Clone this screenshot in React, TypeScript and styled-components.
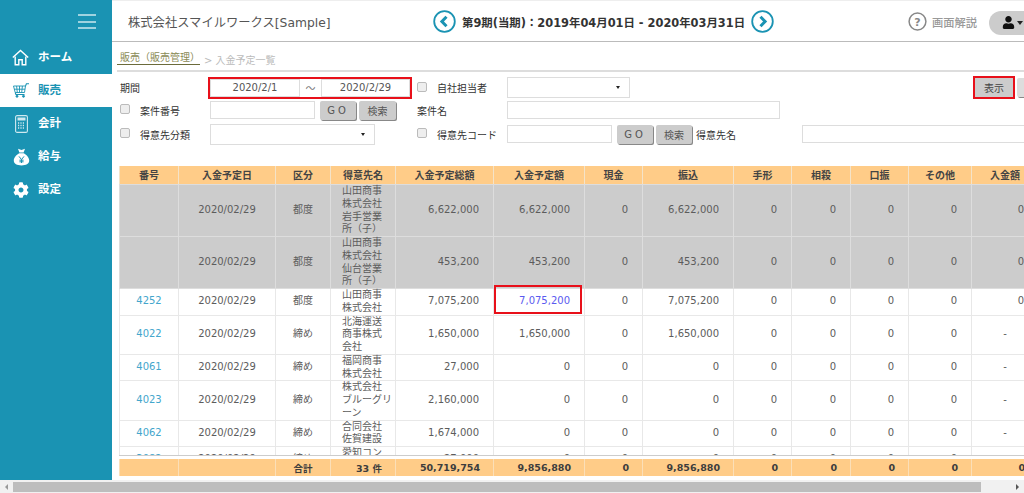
import React from 'react'
import styled, { createGlobalStyle } from 'styled-components'
import { FaCog, FaUser } from 'react-icons/fa'

const GlobalStyle = createGlobalStyle`
  html, body {
    margin: 0;
    width: 1024px;
    height: 493px;
    overflow: hidden;
    background: #fff;
    font-family: 'DejaVu Sans', 'Noto Sans CJK JP', sans-serif;
    font-size: 10px;
    color: #555;
  }
  * { box-sizing: border-box; }
`

const Page = styled.div`
  width: 1024px;
  height: 493px;
  overflow: hidden;
  display: flex;
  flex-direction: column;
`

const Body = styled.div`
  display: flex;
  height: 480px;
`

const Sidebar = styled.nav`
  width: 112px;
  flex-shrink: 0;
  background: #1a93b3;
`

const MenuToggle = styled.div`
  height: 41px;
  padding: 14px 16px 0 78px;
  display: flex;
  flex-direction: column;
  gap: 4.5px;
  span {
    display: block;
    height: 2px;
    background: #9fd3e0;
  }
`

const NavItem = styled.a<{ $active?: boolean }>`
  height: 33px;
  display: flex;
  align-items: center;
  padding-left: 12px;
  font-size: 11.5px;
  font-weight: 700;
  color: ${({ $active }) => ($active ? '#1a93b3' : '#fff')};
  background: ${({ $active }) => ($active ? '#fff' : 'transparent')};
  svg {
    flex-shrink: 0;
  }
`

const NavIcon = styled.span`
  width: 26px;
  height: 20px;
  display: flex;
  align-items: center;
  justify-content: flex-start;
`

const NavLabel = styled.span`
  padding-bottom: 3px;
`

const Main = styled.main`
  flex: 1;
  min-width: 0;
  overflow: hidden;
`

const TopBar = styled.header`
  height: 42px;
  display: flex;
  align-items: center;
  padding-left: 16px;
  padding-top: 1px;
  border-top: 1px solid #eee;
  border-bottom: 1px solid #bbb;
  overflow: hidden;
`

const CompanyName = styled.div`
  width: 305px;
  flex-shrink: 0;
  font-size: 12.3px;
  color: #555;
  white-space: nowrap;
`

const PeriodNav = styled.div`
  display: flex;
  align-items: center;
  gap: 6px;
  flex-shrink: 0;
`

const PeriodText = styled.div`
  font-size: 11.4px;
  font-weight: 700;
  color: #333;
  white-space: nowrap;
`

const HelpLink = styled.div`
  margin-left: auto;
  display: flex;
  align-items: center;
  gap: 5px;
  flex-shrink: 0;
  font-size: 11.25px;
  font-weight: 500;
  color: #999;
`

const UserPill = styled.div`
  width: 60px;
  height: 24px;
  margin: 2px -25px 0 12px;
  flex-shrink: 0;
  display: flex;
  align-items: center;
  gap: 2px;
  padding-left: 13px;
  background: #ccc;
  border-radius: 12px 0 0 12px;
  color: #111;
`

const Caret = styled.span`
  width: 0;
  height: 0;
  border-left: 3px solid transparent;
  border-right: 3px solid transparent;
  border-top: 4px solid #222;
`

const Breadcrumb = styled.div`
  height: 30px;
  margin-left: 5px;
  padding: 10px 0 0 0;
  display: flex;
  align-items: flex-start;
  gap: 4px;
  border-bottom: 2px solid #ddd;
  color: #bbb;
`

const CrumbLink = styled.a`
  padding-left: 3px;
  height: 13px;
  line-height: 12px;
  color: #8a8a55;
  border-bottom: 1px solid #6b6b3a;
`

const FilterForm = styled.form`
  display: grid;
  grid-template-columns: 90px 207px 90px 1fr;
  grid-template-rows: 23px 22px 26px;
  align-items: center;
  margin: 4px 0 19px 8px;
  color: #333;
`

const Field = styled.div`
  display: flex;
  align-items: center;
  min-width: 0;
  white-space: nowrap;
`

const Check = styled.input.attrs({ type: 'checkbox' })`
  appearance: none;
  width: 10px;
  height: 10px;
  margin: -2px 10px 0 0;
  flex-shrink: 0;
  background: #eee;
  border: 1px solid #bbb;
  border-radius: 2px;
`

const DateRange = styled.div`
  width: 200px;
  height: 18px;
  display: flex;
  align-items: center;
  outline: 2px solid #e8101a;
`

const Tilde = styled.span`
  width: 21px;
  text-align: center;
  color: #777;
`

const TextInput = styled.input<{ $width: number; $center?: boolean }>`
  width: ${({ $width }) => $width}px;
  height: 18px;
  flex-shrink: 0;
  padding: 0 2px;
  border: 1px solid #ddd;
  background: #fff;
  font: inherit;
  color: #555;
  text-align: ${({ $center }) => ($center ? 'center' : 'left')};
`

const SelectBox = styled.div<{ $width: number }>`
  position: relative;
  width: ${({ $width }) => $width}px;
  height: 21px;
  flex-shrink: 0;
  border: 1px solid #ddd;
  background: #fff;
  &::after {
    content: '';
    position: absolute;
    right: 9px;
    top: 8px;
    border-left: 2.5px solid transparent;
    border-right: 2.5px solid transparent;
    border-top: 3px solid #222;
  }
`

const Button = styled.button<{ $spaced?: boolean; $width?: number }>`
  width: ${({ $width }) => $width ?? 36}px;
  height: 19px;
  flex-shrink: 0;
  margin-left: ${({ $spaced }) => ($spaced ? 5 : 3)}px;
  padding: 0;
  border: 0;
  border-radius: 2px;
  background: #ccc;
  box-shadow: 1px 1px 0 #888;
  font: inherit;
  color: #555;
  letter-spacing: ${({ $spaced }) => ($spaced ? '3px' : '0')};
`

const ShowButton = styled(Button)`
  margin-left: 0;
  border-radius: 0;
  color: #444;
  outline: 2px solid #e8101a;
`

const ActionGroup = styled.div`
  margin-left: auto;
  margin-right: -31px;
  display: flex;
  align-items: center;
  gap: 4px;
`

const NextButton = styled(Button)`
  margin-left: 0;
  width: 38px;
  background: #ddd;
`

const FieldName = styled.span<{ $width?: number }>`
  margin-left: 4px;
  width: ${({ $width }) => ($width ? `${$width}px` : 'auto')};
  flex-shrink: 0;
`

const TableArea = styled.section`
  width: 919px;
  margin-left: 7px;
`

const BodyClip = styled.div`
  height: 272px;
  overflow: hidden;
  border-bottom: 1px solid #ccc;
`

const Table = styled.table`
  width: 919px;
  table-layout: fixed;
  border-collapse: collapse;
`

const HeadCell = styled.th`
  height: 18px;
  padding: 0 0 1px;
  background: #fc8;
  border: 1px solid #f4e3c8;
  border-top: 0;
  border-bottom: 0;
  font-size: 10px;
  font-weight: 700;
  color: #444;
  white-space: nowrap;
`

const Row = styled.tr<{ $grey?: boolean }>`
  background: ${({ $grey }) => ($grey ? '#ccc' : '#fff')};
  td {
    border: 1px solid ${({ $grey }) => ($grey ? '#ddd' : '#e8e8e8')};
  }
`

const Cell = styled.td<{ $align?: 'left' | 'center' | 'right' }>`
  padding: ${({ $align }) => ($align === 'right' ? '0 14px 0 0' : $align === 'left' ? '0 0 0 11px' : '0')};
  text-align: ${({ $align }) => $align ?? 'center'};
  line-height: 12.75px;
  white-space: nowrap;
  color: #5c5c5c;
`

const NumberLink = styled.a`
  color: #43a6cc;
`

const AmountLink = styled.a`
  color: #5a5af0;
`

const HighlightCell = styled(Cell)`
  position: relative;
  &::after {
    content: '';
    position: absolute;
    inset: -4px 2px 1px 0;
    border: 2px solid #e8101a;
  }
`

const TotalCell = styled.td<{ $center?: boolean }>`
  height: 17px;
  padding: ${({ $center }) => ($center ? '0' : '0 13px 0 0')};
  text-align: ${({ $center }) => ($center ? 'center' : 'right')};
  background: #fc8;
  border: 1px solid #fbdfb8;
  border-top: 0;
  border-bottom: 0;
  font-size: 9.5px;
  font-weight: 700;
  color: #3d3d3d;
  white-space: nowrap;
`

const FootTable = styled(Table)`
  margin-top: 3px;
`

const ScrollBar = styled.div`
  height: 13px;
  display: flex;
  align-items: center;
  padding-top: 1px;
  background: #f1f1f1;
`

const ScrollArrow = styled.span<{ $right?: boolean }>`
  width: 13px;
  display: flex;
  justify-content: center;
  &::before {
    content: '';
    border-top: 3px solid transparent;
    border-bottom: 3px solid transparent;
    ${({ $right }) => ($right ? 'border-left: 3px solid #555;' : 'border-right: 3px solid #999;')}
  }
`

const ScrollThumb = styled.div`
  width: 968px;
  height: 10px;
  background: #bdbdbd;
`

const ScrollGap = styled.div`
  flex: 1;
`

const COLUMNS = [59, 97, 55, 65, 98, 91, 58, 91, 58, 59, 58, 63, 67]
const HEADERS = ['番号', '入金予定日', '区分', '得意先名', '入金予定総額', '入金予定額', '現金', '振込', '手形', '相殺', '口振', 'その他', '入金額']

type Payment = {
  no: string
  kind: string
  name: string[]
  total: string
  planned: string
  transfer: string
  paid: string
  grey?: boolean
  mark?: boolean
}

const ROWS: Payment[] = [
  { no: '', kind: '都度', name: ['山田商事', '株式会社', '岩手営業', '所（子）'], total: '6,622,000', planned: '6,622,000', transfer: '6,622,000', paid: '0', grey: true },
  { no: '', kind: '都度', name: ['山田商事', '株式会社', '仙台営業', '所（子）'], total: '453,200', planned: '453,200', transfer: '453,200', paid: '0', grey: true },
  { no: '4252', kind: '都度', name: ['山田商事', '株式会社'], total: '7,075,200', planned: '7,075,200', transfer: '7,075,200', paid: '0', mark: true },
  { no: '4022', kind: '締め', name: ['北海運送', '商事株式', '会社'], total: '1,650,000', planned: '1,650,000', transfer: '1,650,000', paid: '-' },
  { no: '4061', kind: '締め', name: ['福岡商事', '株式会社'], total: '27,000', planned: '0', transfer: '0', paid: '-' },
  { no: '4023', kind: '締め', name: ['株式会社', 'ブルーグリ', 'ーン'], total: '2,160,000', planned: '0', transfer: '0', paid: '-' },
  { no: '4062', kind: '締め', name: ['合同会社', '佐賀建設'], total: '1,674,000', planned: '0', transfer: '0', paid: '-' },
  { no: '3082', kind: '締め', name: ['愛知コン', 'クリート'], total: '27,000', planned: '0', transfer: '0', paid: '-' },
]

const HomeIcon = () => (
  <svg width="17" height="17" viewBox="0 0 17 17" fill="none" stroke="currentColor" strokeWidth="1.4">
    <path d="M.8 8.6 8.5 1.4l7.7 7.2" />
    <path d="M3.2 7.4v8.4h3.6v-5h3.4v5h3.6V7.4" />
  </svg>
)

const CartIcon = () => (
  <svg width="16" height="15" viewBox="0 0 16 15" fill="none" stroke="currentColor" strokeWidth=".9" style={{ marginLeft: 1 }}>
    <path d="M.5 3h12l-1 6.5H2.2zM3.6 3l.7 6.5M6.5 3v6.5M9.4 3l-.7 6.5M1.2 6.2h10.8" />
    <path strokeWidth="1.1" d="M12.5 3 13.4.8H16M2.2 9.5l.7 2h8.6" />
    <circle cx="4" cy="13.3" r="1" fill="currentColor" />
    <circle cx="10.5" cy="13.3" r="1" fill="currentColor" />
  </svg>
)

const CalcIcon = () => (
  <svg width="14" height="18" viewBox="0 0 14 18" style={{ marginLeft: 3 }}>
    <rect x=".6" y=".6" width="11.8" height="16.8" rx="1.5" fill="none" stroke="#cfe9f0" strokeWidth="1.1" />
    <rect x="2.5" y="2.5" width="8" height="3" fill="#cfe9f0" />
    <path d="M3 8h7M3 10.5h7M3 13h7" stroke="#cfe9f0" strokeWidth="1.3" strokeDasharray="1.2 1.2" />
  </svg>
)

const BagIcon = () => (
  <svg width="17" height="18" viewBox="0 0 17 18" style={{ marginLeft: 1 }}>
    <path d="M5 .8 8.5 2 12 .8 10.6 4.6H6.4z" fill="#fff" />
    <path d="M6.2 5.2h4.6c3 1.6 5.4 4.6 5.4 7.4 0 3.4-3.2 4.8-7.7 4.8S.8 16 .8 12.6c0-2.8 2.4-5.8 5.4-7.4z" fill="#fff" />
    <path d="M6 8.4l2.5 3.2L11 8.4M8.5 11.6V15M6.4 12.2h4.2M6.4 13.8h4.2" fill="none" stroke="#1a93b3" strokeWidth="1" />
  </svg>
)

const ArrowCircle = ({ right }: { right?: boolean }) => (
  <svg width="23" height="23" viewBox="0 0 23 23" fill="none" stroke="#1a93b3">
    <circle cx="11.5" cy="11.5" r="10.3" strokeWidth="1.8" />
    <path d={right ? 'M9.5 6.8l4.6 4.7-4.6 4.7' : 'M13.5 6.8l-4.6 4.7 4.6 4.7'} strokeWidth="3" />
  </svg>
)

const HelpIcon = () => (
  <svg width="19" height="19" viewBox="0 0 19 19" fill="none">
    <circle cx="9.5" cy="9.5" r="8.4" stroke="#888" strokeWidth="1.5" />
    <text x="9.5" y="13.5" textAnchor="middle" fontSize="11" fontWeight="700" fill="#888">?</text>
  </svg>
)

export default function App() {
  return (
    <Page>
      <GlobalStyle />
      <Body>
        <Sidebar>
          <MenuToggle>
            <span />
            <span />
            <span />
          </MenuToggle>
          <NavItem>
            <NavIcon><HomeIcon /></NavIcon>
            <NavLabel>ホーム</NavLabel>
          </NavItem>
          <NavItem $active>
            <NavIcon><CartIcon /></NavIcon>
            <NavLabel>販売</NavLabel>
          </NavItem>
          <NavItem>
            <NavIcon><CalcIcon /></NavIcon>
            <NavLabel>会計</NavLabel>
          </NavItem>
          <NavItem>
            <NavIcon><BagIcon /></NavIcon>
            <NavLabel>給与</NavLabel>
          </NavItem>
          <NavItem>
            <NavIcon><FaCog size={16} style={{ marginLeft: 1 }} /></NavIcon>
            <NavLabel>設定</NavLabel>
          </NavItem>
        </Sidebar>
        <Main>
          <TopBar>
            <CompanyName>株式会社スマイルワークス[Sample]</CompanyName>
            <PeriodNav>
              <ArrowCircle />
              <PeriodText>第9期(当期)：2019年04月01日 - 2020年03月31日</PeriodText>
              <ArrowCircle right />
            </PeriodNav>
            <HelpLink>
              <HelpIcon />
              画面解説
            </HelpLink>
            <UserPill>
              <FaUser size={13} />
              <Caret />
            </UserPill>
          </TopBar>
          <Breadcrumb>
            <CrumbLink>販売（販売管理）</CrumbLink>
            <span>&gt; 入金予定一覧</span>
          </Breadcrumb>
          <FilterForm>
            <Field>期間</Field>
            <Field>
              <DateRange>
                <TextInput $width={90} $center defaultValue="2020/2/1" />
                <Tilde>～</Tilde>
                <TextInput $width={89} $center defaultValue="2020/2/29" />
              </DateRange>
            </Field>
            <Field><Check />自社担当者</Field>
            <Field>
              <SelectBox $width={123} />
              <ActionGroup>
                <ShowButton $width={38}>表示</ShowButton>
                <NextButton />
              </ActionGroup>
            </Field>

            <Field><Check />案件番号</Field>
            <Field>
              <TextInput $width={105} />
              <Button $spaced>GO</Button>
              <Button $width={37}>検索</Button>
            </Field>
            <Field>案件名</Field>
            <Field><TextInput $width={273} /></Field>

            <Field><Check />得意先分類</Field>
            <Field><SelectBox $width={165} /></Field>
            <Field><Check />得意先コード</Field>
            <Field>
              <TextInput $width={105} />
              <Button $spaced>GO</Button>
              <Button>検索</Button>
              <FieldName $width={106}>得意先名</FieldName>
              <TextInput $width={240} />
            </Field>
          </FilterForm>
          <TableArea>
            <Table>
              <colgroup>
                {COLUMNS.map((w, i) => <col key={i} width={w} />)}
              </colgroup>
              <thead>
                <tr>
                  {HEADERS.map(h => <HeadCell key={h}>{h}</HeadCell>)}
                </tr>
              </thead>
            </Table>
            <BodyClip>
              <Table>
                <colgroup>
                  {COLUMNS.map((w, i) => <col key={i} width={w} />)}
                </colgroup>
                <tbody>
                  {ROWS.map((r, i) => (
                    <Row key={i} $grey={r.grey}>
                      <Cell><NumberLink>{r.no}</NumberLink></Cell>
                      <Cell>2020/02/29</Cell>
                      <Cell>{r.kind}</Cell>
                      <Cell $align="left">
                        {r.name.map((line, j) => (
                          <React.Fragment key={j}>
                            {j > 0 && <br />}
                            {line}
                          </React.Fragment>
                        ))}
                      </Cell>
                      <Cell $align="right">{r.total}</Cell>
                      {r.mark ? (
                        <HighlightCell $align="right"><AmountLink>{r.planned}</AmountLink></HighlightCell>
                      ) : (
                        <Cell $align="right">{r.planned}</Cell>
                      )}
                      <Cell $align="right">0</Cell>
                      <Cell $align="right">{r.transfer}</Cell>
                      <Cell $align="right">0</Cell>
                      <Cell $align="right">0</Cell>
                      <Cell $align="right">0</Cell>
                      <Cell $align="right">0</Cell>
                      {r.paid === '-' ? <Cell>-</Cell> : <Cell $align="right">{r.paid}</Cell>}
                    </Row>
                  ))}
                </tbody>
              </Table>
            </BodyClip>
            <FootTable>
              <colgroup>
                {COLUMNS.map((w, i) => <col key={i} width={w} />)}
              </colgroup>
              <tfoot>
                <tr>
                  <TotalCell />
                  <TotalCell />
                  <TotalCell $center>合計</TotalCell>
                  <TotalCell>33 件</TotalCell>
                  <TotalCell>50,719,754</TotalCell>
                  <TotalCell>9,856,880</TotalCell>
                  <TotalCell>0</TotalCell>
                  <TotalCell>9,856,880</TotalCell>
                  <TotalCell>0</TotalCell>
                  <TotalCell>0</TotalCell>
                  <TotalCell>0</TotalCell>
                  <TotalCell>0</TotalCell>
                  <TotalCell>0</TotalCell>
                </tr>
              </tfoot>
            </FootTable>
          </TableArea>
        </Main>
      </Body>
      <ScrollBar>
        <ScrollArrow />
        <ScrollThumb />
        <ScrollGap />
        <ScrollArrow $right />
      </ScrollBar>
    </Page>
  )
}
